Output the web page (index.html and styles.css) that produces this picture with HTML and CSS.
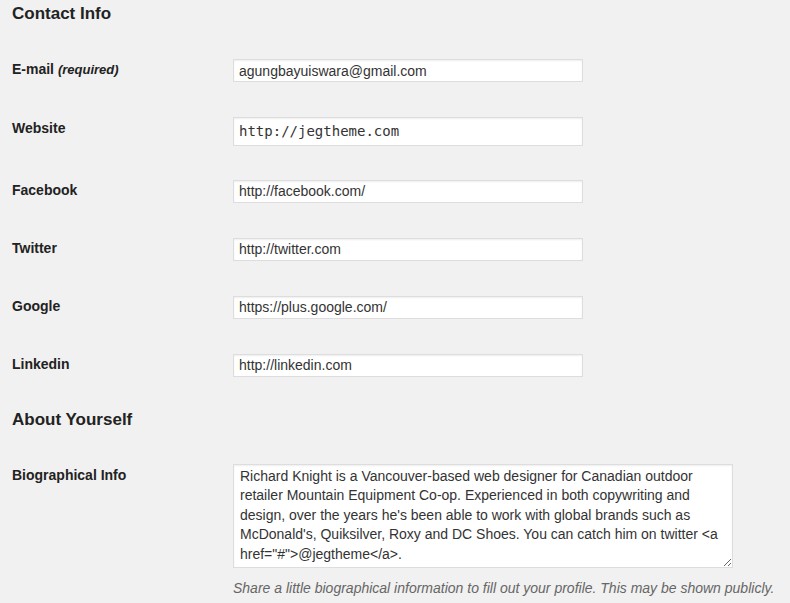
FILE: index.html
```html
<!DOCTYPE html>
<html lang="en">
<head>
    <meta charset="UTF-8">
    <meta name="viewport" content="width=device-width, initial-scale=1.0">
    <title>Profile</title>
    <link rel="stylesheet" href="styles.css">
</head>
<body>
    <h2 class="section-title">Contact Info</h2>
    <div class="form-table">
        <div class="form-row">
            <label class="form-label" for="email">E-mail <em>(required)</em></label>
            <div class="form-field">
                <input class="text-input" type="text" id="email" value="agungbayuiswara@gmail.com">
            </div>
        </div>
        <div class="form-row">
            <label class="form-label" for="url">Website</label>
            <div class="form-field">
                <input class="text-input code" type="text" id="url" value="http://jegtheme.com">
            </div>
        </div>
        <div class="form-row">
            <label class="form-label" for="facebook">Facebook</label>
            <div class="form-field">
                <input class="text-input" type="text" id="facebook" value="http://facebook.com/">
            </div>
        </div>
        <div class="form-row">
            <label class="form-label" for="twitter">Twitter</label>
            <div class="form-field">
                <input class="text-input" type="text" id="twitter" value="http://twitter.com">
            </div>
        </div>
        <div class="form-row">
            <label class="form-label" for="google">Google</label>
            <div class="form-field">
                <input class="text-input" type="text" id="google" value="https://plus.google.com/">
            </div>
        </div>
        <div class="form-row">
            <label class="form-label" for="linkedin">Linkedin</label>
            <div class="form-field">
                <input class="text-input" type="text" id="linkedin" value="http://linkedin.com">
            </div>
        </div>
    </div>

    <h2 class="section-title">About Yourself</h2>
    <div class="form-table">
        <div class="form-row">
            <label class="form-label" for="description">Biographical Info</label>
            <div class="form-field stacked">
                <textarea class="bio" id="description">Richard Knight is a Vancouver-based web designer for Canadian outdoor retailer Mountain Equipment Co-op. Experienced in both copywriting and design, over the years he's been able to work with global brands such as McDonald's, Quiksilver, Roxy and DC Shoes. You can catch him on twitter &lt;a href="#"&gt;@jegtheme&lt;/a&gt;.</textarea>
                <p class="description">Share a little biographical information to fill out your profile. This may be shown publicly.</p>
            </div>
        </div>
    </div>
</body>
</html>
```

FILE: styles.css
```css
* {
    box-sizing: border-box;
    margin: 0;
    padding: 0;
}

body {
    background: #f1f1f1;
    color: #222;
    font-family: "Liberation Sans", Arial, sans-serif;
    padding: 3px 12px;
}

.section-title {
    font-size: 17px;
    line-height: 22px;
    font-weight: bold;
    color: #222;
    margin-bottom: 16.5px;
}

.form-table + .section-title {
    margin-top: 14.5px;
}

.form-row {
    display: flex;
}

.form-label {
    width: 221px;
    flex-shrink: 0;
    padding: 18px 0 22px;
    font-size: 14px;
    line-height: 18px;
    font-weight: bold;
}

.form-label em {
    font-size: 13px;
}

.form-field {
    display: flex;
    align-items: center;
    padding: 16px 0 17px;
}

.form-field.stacked {
    flex-direction: column;
    align-items: flex-start;
}

.text-input {
    width: 350px;
    height: 23px;
    padding: 0 5px;
    border: 1px solid #ddd;
    background: #fff;
    color: #333;
    font-family: "Liberation Sans", Arial, sans-serif;
    font-size: 14px;
    box-shadow: inset 0 1px 2px rgba(0,0,0,0.07);
    outline: none;
}

.text-input.code {
    height: 29px;
    font-family: "DejaVu Sans Mono", monospace;
}

.bio {
    width: 500px;
    height: 104px;
    padding: 2px 6px;
    border: 1px solid #ddd;
    background: #fff;
    color: #333;
    font-family: "Liberation Sans", Arial, sans-serif;
    font-size: 14px;
    line-height: 19.6px;
    box-shadow: inset 0 1px 2px rgba(0,0,0,0.07);
    outline: none;
}

.description {
    margin-top: 11px;
    font-size: 14px;
    line-height: 18px;
    font-style: italic;
    color: #666;
    white-space: nowrap;
}
```
